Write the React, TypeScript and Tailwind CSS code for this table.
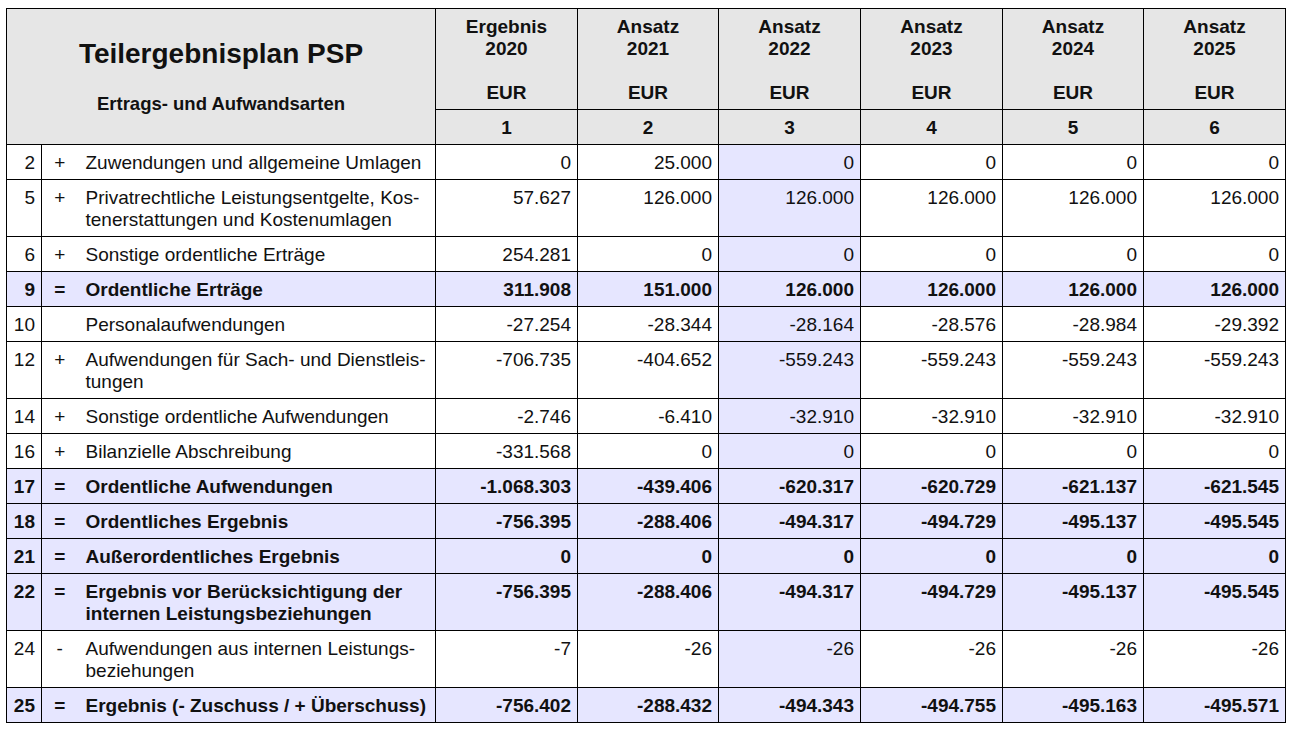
import React from "react";

type Row = {
  n: string;
  s: string;
  label: React.ReactNode;
  v: string[];
  bold?: boolean;
};

const rows: Row[] = [
  { n: "2", s: "+", label: "Zuwendungen und allgemeine Umlagen", v: ["0", "25.000", "0", "0", "0", "0"] },
  {
    n: "5",
    s: "+",
    label: (
      <>
        Privatrechtliche Leistungsentgelte, Kos-
        <br />
        tenerstattungen und Kostenumlagen
      </>
    ),
    v: ["57.627", "126.000", "126.000", "126.000", "126.000", "126.000"],
  },
  { n: "6", s: "+", label: "Sonstige ordentliche Erträge", v: ["254.281", "0", "0", "0", "0", "0"] },
  { n: "9", s: "=", label: "Ordentliche Erträge", v: ["311.908", "151.000", "126.000", "126.000", "126.000", "126.000"], bold: true },
  { n: "10", s: "", label: "Personalaufwendungen", v: ["-27.254", "-28.344", "-28.164", "-28.576", "-28.984", "-29.392"] },
  {
    n: "12",
    s: "+",
    label: (
      <>
        Aufwendungen für Sach- und Dienstleis-
        <br />
        tungen
      </>
    ),
    v: ["-706.735", "-404.652", "-559.243", "-559.243", "-559.243", "-559.243"],
  },
  { n: "14", s: "+", label: "Sonstige ordentliche Aufwendungen", v: ["-2.746", "-6.410", "-32.910", "-32.910", "-32.910", "-32.910"] },
  { n: "16", s: "+", label: "Bilanzielle Abschreibung", v: ["-331.568", "0", "0", "0", "0", "0"] },
  { n: "17", s: "=", label: "Ordentliche Aufwendungen", v: ["-1.068.303", "-439.406", "-620.317", "-620.729", "-621.137", "-621.545"], bold: true },
  { n: "18", s: "=", label: "Ordentliches Ergebnis", v: ["-756.395", "-288.406", "-494.317", "-494.729", "-495.137", "-495.545"], bold: true },
  { n: "21", s: "=", label: "Außerordentliches Ergebnis", v: ["0", "0", "0", "0", "0", "0"], bold: true },
  {
    n: "22",
    s: "=",
    label: (
      <>
        Ergebnis vor Berücksichtigung der
        <br />
        internen Leistungsbeziehungen
      </>
    ),
    v: ["-756.395", "-288.406", "-494.317", "-494.729", "-495.137", "-495.545"],
    bold: true,
  },
  {
    n: "24",
    s: "-",
    label: (
      <>
        Aufwendungen aus internen Leistungs-
        <br />
        beziehungen
      </>
    ),
    v: ["-7", "-26", "-26", "-26", "-26", "-26"],
  },
  { n: "25", s: "=", label: "Ergebnis (- Zuschuss / + Überschuss)", v: ["-756.402", "-288.432", "-494.343", "-494.755", "-495.163", "-495.571"], bold: true },
];

const heads = [
  ["Ergebnis", "2020"],
  ["Ansatz", "2021"],
  ["Ansatz", "2022"],
  ["Ansatz", "2023"],
  ["Ansatz", "2024"],
  ["Ansatz", "2025"],
];

const colW = ["w-[142px]", "w-[141px]", "w-[142px]", "w-[142px]", "w-[141px]", "w-[142px]"];

export default function App() {
  return (
    <div className="min-h-[732px] bg-white pl-[6px] pt-[8px] text-[#111]" style={{ fontFamily: '"Liberation Sans", Arial, sans-serif' }}>
      <table className="w-[1280px] table-fixed border-collapse border border-black text-[19px] leading-[22px]">
        <colgroup>
          <col className="w-[35px]" />
          <col className="w-[36px]" />
          <col className="w-[358px]" />
          {colW.map((c, i) => (
            <col key={i} className={c} />
          ))}
        </colgroup>
        <thead>
          <tr className="bg-[#e6e6e6]">
            <th colSpan={3} rowSpan={2} className="border border-black p-0 align-top font-bold">
              <div className="flex h-[135px] flex-col items-center pt-[29px]">
                <div className="text-[28px] leading-[32px]">Teilergebnisplan PSP</div>
                <div className="mt-[23px] text-[18.5px] leading-[22px]">Ertrags- und Aufwandsarten</div>
              </div>
            </th>
            {heads.map((h, i) => (
              <th key={i} className="border border-black px-[6px] pb-[5px] pt-[7px] text-center align-top font-bold">
                {h[0]}
                <br />
                {h[1]}
                <br />
                <br />
                EUR
              </th>
            ))}
          </tr>
          <tr className="bg-[#e6e6e6]">
            {heads.map((_, i) => (
              <th key={i} className="border border-black px-[6px] pb-[5px] pt-[7px] text-center font-bold">
                {i + 1}
              </th>
            ))}
          </tr>
        </thead>
        <tbody>
          {rows.map((r, ri) => (
            <tr key={ri} className={r.bold ? "bg-[#e6e6ff] font-bold" : "bg-white"}>
              <td className="border border-black pb-[5px] pr-[6px] pt-[7px] text-right align-top">{r.n}</td>
              <td className="border-y border-l border-black pb-[5px] pt-[7px] text-center align-top">{r.s}</td>
              <td className="border-y border-r border-black pb-[5px] pl-[8px] pr-[4px] pt-[7px] text-left align-top">{r.label}</td>
              {r.v.map((v, vi) => (
                <td
                  key={vi}
                  className={
                    "border border-black pb-[5px] pr-[6px] pt-[7px] text-right align-top " + (vi === 2 && !r.bold ? "bg-[#e6e6ff]" : "")
                  }
                >
                  {v}
                </td>
              ))}
            </tr>
          ))}
        </tbody>
      </table>
    </div>
  );
}
